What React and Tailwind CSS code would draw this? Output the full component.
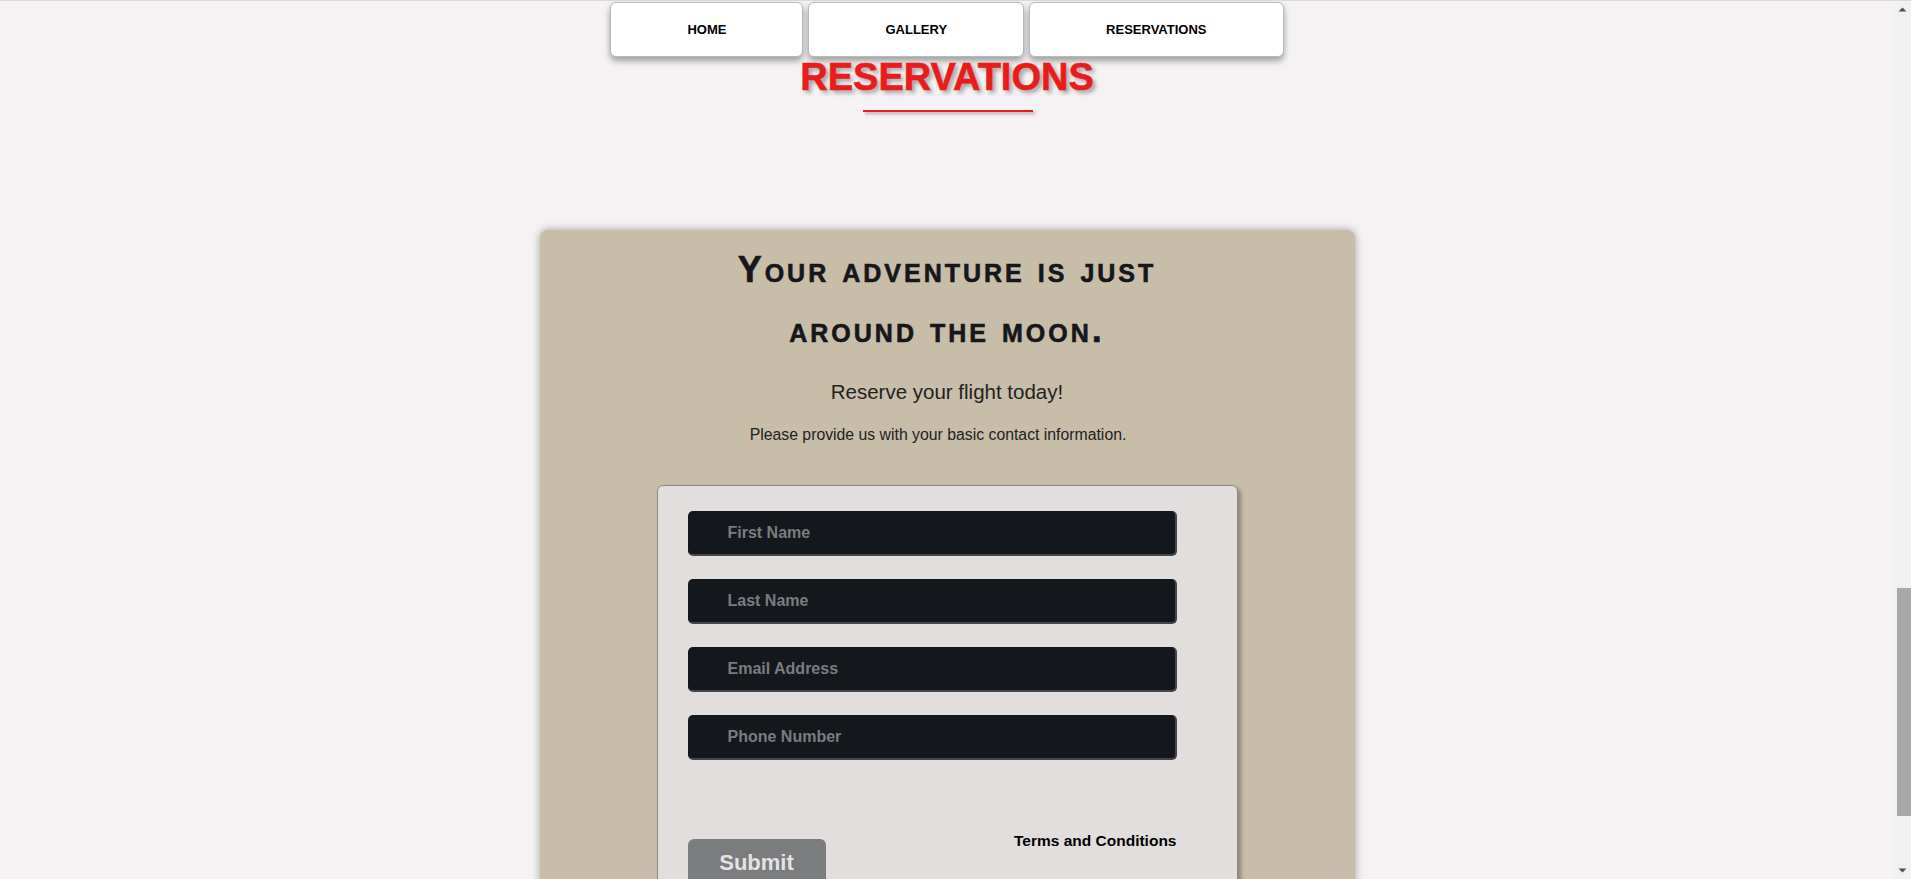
import React from "react";

const navItems = ["HOME", "GALLERY", "RESERVATIONS"];
const fields = ["First Name", "Last Name", "Email Address", "Phone Number"];

const Scrollbar = () => (
  <div className="w-[17px] shrink-0 bg-[#f1f1f1] flex flex-col items-center">
    <svg width="17" height="17" viewBox="0 0 17 17" className="shrink-0">
      <path d="M4.5 10.5 L8.5 6.5 L12.5 10.5 Z" fill="#505050" />
    </svg>
    <div className="mt-[570px] h-[228px] w-[14px] ml-[3px] bg-[#a8a8a8]" />
    <div className="flex-1" />
    <svg width="17" height="17" viewBox="0 0 17 17" className="shrink-0">
      <path d="M4.5 6.5 L8.5 10.5 L12.5 6.5 Z" fill="#505050" />
    </svg>
  </div>
);

const App = () => {
  return (
    <div className="h-screen overflow-hidden flex border-t border-[#d9d9d9] bg-[#f4f2f3] [font-family:'Liberation_Sans',Arial,sans-serif]">
      <div className="flex-1 flex flex-col items-center">
        <nav className="mt-[1px] flex gap-[5px]">
          {navItems.map((item) => (
            <a
              key={item}
              href="#"
              className="h-[55px] px-[76px] flex items-center justify-center bg-white rounded-[6px] border border-[#b9b9b9] shadow-[0_4px_6px_rgba(0,0,0,0.35)] text-[13px] font-bold text-black"
            >
              {item}
            </a>
          ))}
        </nav>

        <h1 className="mt-[1px] text-[38px] leading-none font-bold text-[#e81c1c] [-webkit-text-stroke:0.6px_#e81c1c] [text-shadow:3px_3px_4px_rgba(0,0,0,0.35)]">
          RESERVATIONS
        </h1>
        <div className="mt-[14px] ml-[2px] w-[170px] border-t-2 border-[#e81c1c] shadow-[2px_2px_3px_rgba(0,0,0,0.35)]" />

        <section className="mt-[118px] w-[815px] bg-[#c8bda9] rounded-[8px] shadow-[0_0_8px_rgba(0,0,0,0.35)] pt-[10px] pb-[200px] flex flex-col items-center">
          <h2 className="text-center text-[36px] leading-[60px] font-bold text-[#15171b] [-webkit-text-stroke:0.6px_#15171b] [font-variant:small-caps] tracking-[3px]">
            Your adventure is just
            <br />
            around the moon.
          </h2>
          <p className="mt-[20px] text-[20.5px] leading-[23px] text-[#222]">
            Reserve your flight today!
          </p>
          <p className="mt-[24px] mr-[18px] text-[15.8px] leading-[16px] text-[#222]">
            Please provide us with your basic contact information.
          </p>

          <form className="mt-[42px] w-[581px] bg-[#e2dedd] border border-[#8d8a88] rounded-[6px] shadow-[3px_3px_4px_rgba(0,0,0,0.3)] pt-[25px] pl-[30px] pb-[120px]">
            <div className="w-[489px] flex flex-col gap-[23px]">
              {fields.map((f) => (
                <input
                  key={f}
                  type="text"
                  placeholder={f}
                  className="h-[45px] w-full rounded-[5px] bg-[#14171c] border-r-2 border-b-2 border-[#43464e] pl-[40px] text-[16px] font-bold text-[#ddd] placeholder:text-[#7c7c80] outline-none"
                />
              ))}
            </div>
            <div className="mt-[72px] w-[489px] flex justify-between items-start">
              <button
                type="button"
                className="mt-[7px] w-[138px] h-[46px] rounded-[6px] bg-[#7b7c7e] text-[22px] font-bold text-[#e5e2e2]"
              >
                Submit
              </button>
              <a href="#" className="text-[15.5px] leading-[18px] font-bold text-black">
                Terms and Conditions
              </a>
            </div>
          </form>
        </section>
      </div>
      <Scrollbar />
    </div>
  );
};

export default App;
